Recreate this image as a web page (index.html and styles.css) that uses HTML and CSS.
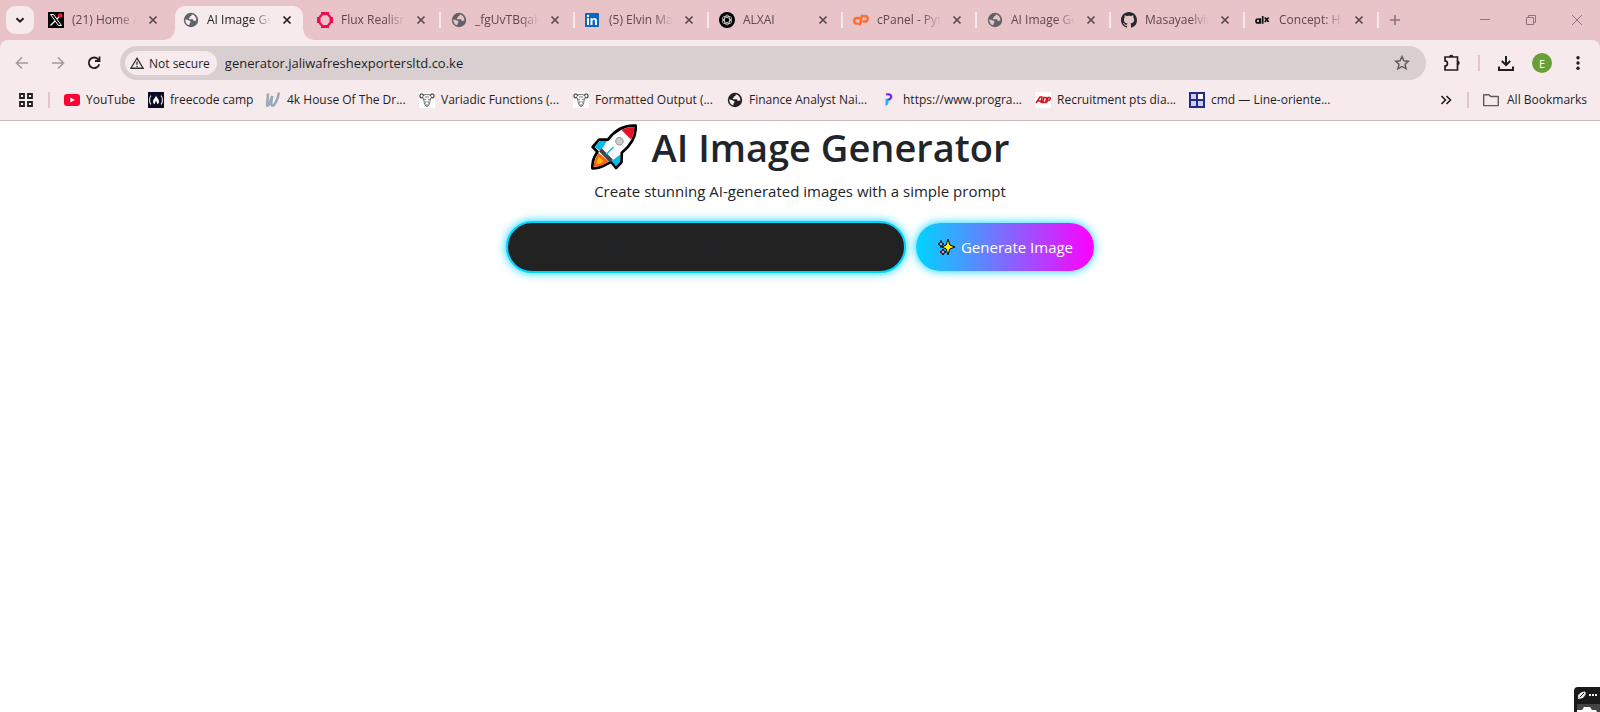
FILE: index.html
```
<!DOCTYPE html>
<html lang="en">
<head>
    <meta charset="UTF-8">
    <meta name="viewport" content="width=device-width, initial-scale=1.0">
    <title>AI Image Generator</title>
    <link rel="stylesheet" href="styles.css">
</head>
<body>
    <!-- shared icons -->
    <svg class="icon-defs" aria-hidden="true">
        <symbol id="close" viewBox="0 0 16 16"><path d="M4.500 4.500l7 7M11.500 4.500l-7 7" fill="none" stroke="currentColor" stroke-width="1.700"/></symbol>
        <symbol id="globe" viewBox="0 0 16 16">
            <circle cx="8" cy="8" r="7.200" fill="currentColor"/>
            <path d="M8.700 2.300c.3 1-.2 1.700-1.200 1.900-.8.200-.9.800-.8 1.500-.9.400-1.200 1-.6 1.600h3c.9 0 1.300.6 1.300 1.400 1.100 0 1.900.2 2.900-.1A5.700 5.700 0 0 0 8.700 2.300zM2.400 7.200c1.600.5 3.300.9 4.600 1.700.8.500.7 1.400 0 1.900-.5.400-.3 1.500-.8 2.500A5.600 5.600 0 0 1 2.400 7.200z" fill="var(--land)"/>
        </symbol>
        <symbol id="gnu" viewBox="0 0 16 16">
            <path d="M0 0h16v16H0z" fill="#fff"/>
            <path d="M5 4C3 .500.500 2 1 4.500 1.500 6.500 4 6 4 4.500M11 4c2-3.500 4.500-2 4 .5-.5 2-3 1.500-3 0" fill="none" stroke="#444" stroke-width="1.200"/>
            <path d="M4 3.500c2-1.500 6-1.500 8 0M4 6l1 3 .5 3L8 15l2.500-3 .5-3 1-3M4.500 7l2.500.8M11.500 7L9 7.800M7 9l-.5 2.500M9 9l.5 2.500M6.500 13h3M6 5h4" fill="none" stroke="#555" stroke-width=".8"/>
        </symbol>
    </svg>

    <header class="browser">
        <div class="tab-strip">
            <button class="tab-search" aria-label="Search tabs">
                <svg viewBox="0 0 16 16" width="16" height="16"><path d="M4.500 6.200L8 9.700l3.500-3.500" fill="none" stroke="#1f1f1f" stroke-width="2"/></svg>
            </button>
            <div class="tabs">
                <div class="tab before-active">
                    <svg class="favicon" viewBox="0 0 16 16"><path d="M0 0h16v16H0z" fill="#000"/><path d="M2.500 2.500h3l8 11h-3z" fill="none" stroke="#fff"/><path d="M13 2.500L9 7M7 9l-4.500 4.500" stroke="#fff" stroke-width="1.300"/><circle cx="12.200" cy="3.500" r="2.300" fill="#f91828"/></svg>
                    <span class="tab-title">(21) Home / X</span>
                    <button class="tab-close" aria-label="Close tab"><svg><use href="#close"/></svg></button>
                </div>
                <div class="tab active">
                    <svg class="favicon globe"><use href="#globe"/></svg>
                    <span class="tab-title">AI Image Generator</span>
                    <button class="tab-close" aria-label="Close tab"><svg><use href="#close"/></svg></button>
                </div>
                <div class="tab">
                    <svg class="favicon" viewBox="0 0 16 16"><path d="M4 0h8v2l2 2v1h2v6h-2v1l-2 2v2H4v-2l-2-2v-1H0V5h2V4l2-2zM6 3L3.500 6v4L6 13h4l2.500-3V6L10 3z" fill="#f50a50" fill-rule="evenodd"/></svg>
                    <span class="tab-title">Flux Realism Lora</span>
                    <button class="tab-close" aria-label="Close tab"><svg><use href="#close"/></svg></button>
                </div>
                <div class="tab">
                    <svg class="favicon globe"><use href="#globe"/></svg>
                    <span class="tab-title">_fgUvTBqaHxk</span>
                    <button class="tab-close" aria-label="Close tab"><svg><use href="#close"/></svg></button>
                </div>
                <div class="tab">
                    <svg class="favicon" viewBox="0 0 16 16"><rect y="1" width="14" height="14" rx="1" fill="#0a66c2"/><path d="M2 6.200h2V13H2zM5.500 6.200h2v1C8.700 5.400 12 5.700 12 8.700V13h-2V9.300c0-2-2.500-1.900-2.500 0V13h-2z" fill="#fff"/><circle cx="3" cy="4" r="1.200" fill="#fff"/></svg>
                    <span class="tab-title">(5) Elvin Masaya</span>
                    <button class="tab-close" aria-label="Close tab"><svg><use href="#close"/></svg></button>
                </div>
                <div class="tab">
                    <svg class="favicon" viewBox="0 0 16 16"><circle cx="8" cy="8" r="8" fill="#000"/><g fill="none" stroke="#ddd" stroke-width=".8"><ellipse cx="8" cy="8" rx="2.600" ry="5"/><ellipse cx="8" cy="8" rx="2.600" ry="5" transform="rotate(60 8 8)"/><ellipse cx="8" cy="8" rx="2.600" ry="5" transform="rotate(120 8 8)"/></g></svg>
                    <span class="tab-title">ALXAI</span>
                    <button class="tab-close" aria-label="Close tab"><svg><use href="#close"/></svg></button>
                </div>
                <div class="tab">
                    <svg class="favicon" viewBox="0 0 16 16"><path d="M7.500 6H4a2.800 2.800 0 0 0 0 5.700h1.500M6.500 13.500L9 4h3a2.700 2.700 0 0 1 0 5.500H9.500" fill="none" stroke="#ff6c2c" stroke-width="2.300"/></svg>
                    <span class="tab-title">cPanel - Python</span>
                    <button class="tab-close" aria-label="Close tab"><svg><use href="#close"/></svg></button>
                </div>
                <div class="tab">
                    <svg class="favicon globe"><use href="#globe"/></svg>
                    <span class="tab-title">AI Image Generator</span>
                    <button class="tab-close" aria-label="Close tab"><svg><use href="#close"/></svg></button>
                </div>
                <div class="tab">
                    <svg class="favicon" viewBox="0 0 16 16"><path fill="#24292f" d="M8 0C3.580 0 0 3.580 0 8c0 3.540 2.290 6.530 5.470 7.590.4.070.55-.17.55-.38 0-.19-.01-.82-.01-1.490-2.010.37-2.530-.49-2.690-.94-.09-.23-.48-.94-.82-1.130-.28-.15-.68-.52-.01-.53.63-.01 1.080.58 1.230.82.72 1.210 1.870.87 2.330.66.07-.52.28-.87.51-1.070-1.780-.2-3.640-.89-3.640-3.950 0-.87.31-1.590.82-2.150-.08-.2-.36-1.020.08-2.120 0 0 .67-.21 2.200.82.64-.18 1.320-.27 2-.27s1.360.09 2 .27c1.530-1.040 2.200-.82 2.200-.82.44 1.100.16 1.920.08 2.120.51.56.82 1.270.82 2.150 0 3.070-1.870 3.750-3.650 3.950.29.25.54.73.54 1.480 0 1.070-.01 1.930-.01 2.200 0 .21.15.46.55.38A8.010 8.010 0 0 0 16 8c0-4.420-3.580-8-8-8z"/></svg>
                    <span class="tab-title">Masayaelvin</span>
                    <button class="tab-close" aria-label="Close tab"><svg><use href="#close"/></svg></button>
                </div>
                <div class="tab">
                    <svg class="favicon" viewBox="0 0 16 16"><g fill="none" stroke="#111" stroke-width="1.700"><circle cx="3" cy="9" r="2"/><path d="M5.300 6.200v5.600M7.700 4v7.800M9.700 5.500l4 4.500M13.700 5.500l-4 4.500"/></g></svg>
                    <span class="tab-title">Concept: Hypertext</span>
                    <button class="tab-close" aria-label="Close tab"><svg><use href="#close"/></svg></button>
                </div>
            </div>
            <button class="new-tab" aria-label="New tab">
                <svg viewBox="0 0 16 16" width="16" height="16"><path d="M8 3v10M3 8h10" stroke="#8c7679" stroke-width="1.600"/></svg>
            </button>
            <div class="window-controls">
                <button aria-label="Minimize"><svg viewBox="0 0 10 10"><path d="M0 4.500h10" stroke="#8c7679" fill="none"/></svg></button>
                <button aria-label="Restore"><svg viewBox="0 0 10 10"><path d="M.5 2.500h7v7h-7zM2.500 2.500v-2h7v7h-2" stroke="#8c7679" fill="none"/></svg></button>
                <button aria-label="Close"><svg viewBox="0 0 10 10"><path d="M0 0l10 10M10 0L0 10" stroke="#8c7679" fill="none"/></svg></button>
            </div>
        </div>

        <div class="chrome-panel">
            <div class="toolbar">
                <button class="tool-button" aria-label="Back"><svg viewBox="0 0 16 16"><path d="M14 8H3M8 2.500L2.500 8 8 13.500" fill="none" stroke="#a39a9c" stroke-width="1.600"/></svg></button>
                <button class="tool-button" aria-label="Forward"><svg viewBox="0 0 16 16"><path d="M2 8h11M8 2.500L13.500 8 8 13.500" fill="none" stroke="#a39a9c" stroke-width="1.600"/></svg></button>
                <button class="tool-button" aria-label="Reload"><svg viewBox="0 0 16 16"><path d="M13.200 9.200a5.300 5.300 0 1 1-1.200-5l1.500 1.600M13.500 1.500v4.500H9" fill="none" stroke="#1f1f1f" stroke-width="1.800"/></svg></button>
                <div class="address-bar">
                    <button class="site-chip">
                        <svg viewBox="0 0 16 14" width="14" height="14"><path d="M8 1.500L15 13H1z" fill="none" stroke="#333" stroke-width="1.500"/><path d="M8 5.500v3.500M8 10v1.500" stroke="#333" stroke-width="1.500"/></svg>
                        Not secure
                    </button>
                    <input class="url" type="text" aria-label="Address" value="generator.jaliwafreshexportersltd.co.ke">
                    <button class="star" aria-label="Bookmark this tab"><svg viewBox="0 0 16 16"><path d="M8 1.500l1.900 4.300 4.600.4-3.500 3.100 1.100 4.600L8 11.500l-4.100 2.400L5 9.300 1.500 6.200l4.600-.4z" fill="none" stroke="#5a5557" stroke-width="1.400"/></svg></button>
                </div>
                <div class="toolbar-actions">
                    <button class="tool-button" aria-label="Extensions"><svg viewBox="0 0 18 18"><path d="M2 3h12.500v13H2v-4c3.200-.2 3.200-5 0-5.200z" stroke="#1f1f1f" stroke-width="1.700" fill="none"/><path d="M6 3a2.200 2.200 0 0 1 4.400 0zM14.500 6.800a2.200 2.200 0 0 1 0 4.400z" fill="#1f1f1f"/></svg></button>
                    <span class="divider"></span>
                    <button class="tool-button" aria-label="Downloads"><svg viewBox="0 0 18 18"><path d="M9 2v8.500M4.800 7L9 11l4.200-4M2 12.500V16h14v-3.500" fill="none" stroke="#1f1f1f" stroke-width="2"/></svg></button>
                    <button class="avatar" aria-label="Profile">E</button>
                    <button class="tool-button menu" aria-label="Menu"><svg viewBox="0 0 16 16"><g fill="#1f1f1f"><circle cx="8" cy="2.800" r="1.700"/><circle cx="8" cy="8" r="1.700"/><circle cx="8" cy="13.200" r="1.700"/></g></svg></button>
                </div>
            </div>

            <nav class="bookmarks">
                <button class="apps" aria-label="Apps"><svg viewBox="0 0 14 14" width="14" height="14"><path d="M1 1h4v4H1zM9 1h4v4H9zM1 9h4v4H1zM9 9h4v4H9z" fill="none" stroke="#1f1f1f" stroke-width="1.800"/></svg></button>
                <span class="divider"></span>
                <div class="bookmark-list">
                    <a class="short" href="#"><svg viewBox="0 0 16 16"><rect y="2" width="16" height="12" rx="3" fill="#ff0033"/><path d="M6.300 5.400v5.200l4.500-2.600z" fill="#fff"/></svg><span>YouTube</span></a>
                    <a class="medium" href="#"><svg viewBox="0 0 16 16"><path d="M0 0h16v16H0z" fill="#0a0a23"/><path d="M3 3.500c-2 2.500-2 6.500 0 9M13 3.500c2 2.500 2 6.500 0 9" fill="none" stroke="#ddd" stroke-width="1.200"/><path d="M8 3.500c.5 2 3 3.500 3 6 0 1.500-.7 2.200-1.500 2.700L8 8.500l-1.500 3.700C5.500 11.500 5 10.700 5 9.500c0-2.500 2.500-3.500 3-6z" fill="#fff"/></svg><span>freecode camp</span></a>
                    <a href="#"><svg viewBox="0 0 16 16"><path d="M2.500 1.500c1.500 2-1 8-.3 12 1 1 3-3 5-9.500-1 5-1.500 9.500.2 9.700 2 0 5.500-6 6.500-13.200" fill="none" stroke="#9aaaba" stroke-width="2.600"/></svg><span>4k House Of The Dr...</span></a>
                    <a href="#"><svg><use href="#gnu"/></svg><span>Variadic Functions (...</span></a>
                    <a href="#"><svg><use href="#gnu"/></svg><span>Formatted Output (...</span></a>
                    <a href="#"><svg class="globe dark"><use href="#globe"/></svg><span>Finance Analyst Nai...</span></a>
                    <a href="#"><svg viewBox="0 0 16 16"><path d="M5 2.500c6-1.500 7.500 4.500 1 5.500" fill="none" stroke="#7a1df0" stroke-width="2.200"/><path d="M4.500 6.500L8 8l-1 4.500L4.500 14z" fill="#1ab4ff"/></svg><span>https://www.progra...</span></a>
                    <a href="#"><svg viewBox="0 0 16 16"><path d="M0 0h16v16H0z" fill="#fff"/><path d="M1 11l4-6h2l-1 6M3 9h4M7.500 10.500L9 5.500h1.500c2 0 1 5-1.500 5zM11.500 11L13 5.500h1.500c1.500 0 1 3-1.500 3" fill="none" stroke="#d0121b" stroke-width="1.500"/></svg><span>Recruitment pts dia...</span></a>
                    <a href="#"><svg viewBox="0 0 16 16"><path d="M0 0h16v16H0z" fill="#242a88"/><path d="M2 2h5v5H2zM2 9h5v5H2zM9 9h5v5H9z" fill="#cdd0ea"/><path d="M9 2h5v5H9z" fill="#fff"/></svg><span>cmd — Line-oriente...</span></a>
                </div>
                <button class="more" aria-label="More bookmarks"><svg viewBox="0 0 12 12" width="12" height="12"><path d="M1.500 2l4 4-4 4M6.500 2l4 4-4 4" fill="none" stroke="#1f1f1f" stroke-width="1.600"/></svg></button>
                <span class="divider"></span>
                <a class="all-bookmarks" href="#"><svg viewBox="0 0 16 16"><path d="M.7 2.700h5.200l1.800 1.800h7.600v9.100H.7z" fill="none" stroke="#5f5a5c" stroke-width="1.400" stroke-linejoin="round"/></svg><span>All Bookmarks</span></a>
            </nav>
        </div>
    </header>

    <main class="generator">
        <h1>
            <svg class="rocket" viewBox="0 0 136 134" aria-hidden="true">
                <path d="M132 4C100 2 72 16 50 45L24 45 5 67l14 14-8 14C5 106 4 120 4 130c12 0 26-3 40-11l16-8 14 18 16-17 1-28C121 60 134 34 132 4z" fill="#fff" stroke="#000" stroke-width="8" stroke-linejoin="round"/>
                <path d="M128 8c-14 0-27 3-38 9 9 9 19 19 28 28 8-13 11-24 10-37z" fill="#e81224"/>
                <path d="M47 49H26L11 66l14 11 10-8zM86 89v21l-12 13-14-14z" fill="#00bcf2"/>
                <path d="M24 80l31 32 10-7-34-35z" fill="#444"/>
                <path d="M22 84L12 105c-3 7-4 14-4 21 9 0 21-3 32-9l13-7z" fill="#f7630c"/>
                <path d="M24 96l13 13-12 8-9 1 1-9z" fill="#ffb900"/>
                <path d="M44 89l23-22" stroke="#00bcf2" stroke-width="4"/>
                <circle cx="84" cy="50" r="11" fill="#ccc" stroke="#999" stroke-width="3"/>
            </svg>
            AI Image Generator
        </h1>
        <p>Create stunning AI-generated images with a simple prompt</p>
        <form class="prompt-form" onsubmit="return false">
            <input type="text" class="prompt-input" maxlength="50" aria-label="Prompt" placeholder="Enter your prompt (max 50 chars)">
            <button type="submit" class="generate-button">
                <svg viewBox="0 0 18 18" width="18" height="18" aria-hidden="true">
                    <path d="M4 2.500l1 2.500 2 1-2 1-1 2.500L3 7 1 6l2-1z" fill="#5fd0f5" stroke="#000"/>
                    <path d="M6 11l1 2 2 1-2 1-1 2-1-2-2-1 2-1z" fill="#f58ab0" stroke="#000"/>
                    <path d="M11 1l1.800 6L18 9l-5.200 2L11 17l-1.800-6L5 9l4.200-2z" fill="#fff100" stroke="#000"/>
                </svg>
                Generate Image
            </button>
        </form>
    </main>

    <aside class="capture-widget" aria-label="Capture tool">
        <svg viewBox="0 0 26 25" width="26" height="25">
            <path d="M5 11c-2-3 2-6 6-6 1 3-2 7-6 6zM4 12l6-6" fill="#eee" stroke="#eee"/>
            <path d="M6 10l4-4" stroke="#222"/>
            <path d="M15 7h2v2h-2zM18 7h2v2h-2zM21 7h2v2h-2z" fill="#eee"/>
            <path d="M3 17h23v8H3z" fill="#444"/>
            <path d="M3 25v-2h5l2-3h6l2 3h4l1 2z" fill="#fff"/>
        </svg>
    </aside>
</body>
</html>
```
FILE: styles.css
```
* {
    box-sizing: border-box;
}
body {
    --strip: #e8c3c8;
    --panel: #f7eaec;
    margin: 0;
    min-height: 100vh;
    background-color: #fff;
    color: #212529;
    font-family: "Open Sans", "Noto Sans", sans-serif;
    font-size: 15px;
    line-height: 24px;
}
button {
    display: flex;
    align-items: center;
    justify-content: center;
    padding: 0;
    border: none;
    background: none;
    font-family: inherit;
    color: inherit;
    flex-shrink: 0;
}
svg {
    display: block;
    flex-shrink: 0;
}
.icon-defs {
    display: none;
}
.browser {
    background-color: var(--strip);
    color: #1f1f1f;
    font-size: 12px;
    line-height: 16px;
}

/* tabs */
.tab-strip {
    display: flex;
    height: 40px;
    padding-left: 6px;
}
.tab-search {
    width: 28px;
    height: 28px;
    margin-top: 6px;
    border-radius: 9px;
    background-color: var(--panel);
}
.tabs {
    display: flex;
    margin-left: 5px;
}
.tab {
    position: relative;
    display: flex;
    align-items: center;
    width: 134px;
    padding: 0 11px;
    color: #5b494d;
}
.tab::after {
    content: "";
    width: 2px;
    height: 16px;
    position: absolute;
    right: -1px;
    background-color: var(--panel);
}
.tab.before-active {
    width: 133px;
    padding-left: 9px;
}
.tab.before-active::after {
    display: none;
}
.favicon {
    width: 16px;
    height: 16px;
}
.globe {
    --land: var(--strip);
    color: #5f6368;
}
.tab-title {
    flex: 1;
    min-width: 0;
    margin-left: 8px;
    overflow: hidden;
    white-space: nowrap;
    -webkit-mask-image: linear-gradient(to right, #000 70%, transparent);
    mask-image: linear-gradient(to right, #000 70%, transparent);
}
.tab-close {
    width: 16px;
    height: 16px;
    margin-left: 8px;
}
.tab-close svg {
    width: 16px;
    height: 16px;
}
.tab.active {
    width: 128px;
    margin: 6px 3px 0;
    padding: 0 8px 6px;
    border-radius: 10px 10px 0 0;
    background-color: var(--panel);
    color: #1f1f1f;
}
.active .globe {
    --land: var(--panel);
}
.tab.active::before,
.tab.active::after {
    content: "";
    position: absolute;
    bottom: 0;
    width: 10px;
    height: 10px;
}
.tab.active::before {
    left: -10px;
    background: radial-gradient(circle at 0 0, transparent 9px, var(--panel) 10px);
}
.tab.active::after {
    right: -10px;
    background: radial-gradient(circle at 100% 0, transparent 9px, var(--panel) 10px);
}
.new-tab {
    width: 28px;
    margin-left: 3px;
}
.window-controls {
    display: flex;
    margin-left: auto;
}
.window-controls button {
    width: 46px;
}
.window-controls svg {
    width: 10px;
    height: 10px;
}

/* toolbar */
.chrome-panel {
    background-color: var(--panel);
    border-radius: 8px 8px 0 0;
    border-bottom: 1px solid #c5b9bb;
}
.toolbar {
    display: flex;
    align-items: center;
    height: 46px;
    padding: 0 4px;
}
.tool-button {
    width: 36px;
    height: 34px;
}
.tool-button svg {
    width: 16px;
    height: 16px;
}
.toolbar-actions .tool-button svg {
    width: 18px;
    height: 18px;
}
.address-bar {
    display: flex;
    align-items: center;
    flex: 1;
    height: 34px;
    margin-left: 8px;
    padding: 0 16px 0 5px;
    border-radius: 17px;
    background-color: #d9cfd0;
}
.site-chip {
    gap: 5px;
    height: 24px;
    padding: 0 7px 0 5px;
    border-radius: 12px;
    background-color: var(--panel);
    font-size: 12px;
    font-weight: 500;
}
.url {
    flex: 1;
    min-width: 0;
    padding: 0 8px;
    border: none;
    outline: none;
    background: none;
    color: #1f1f1f;
    font-family: inherit;
    font-size: 13px;
}
.star svg {
    width: 16px;
    height: 16px;
}
.toolbar-actions {
    display: flex;
    align-items: center;
    margin-left: 8px;
}
.divider {
    width: 2px;
    height: 16px;
    background-color: var(--strip);
}
.toolbar-actions .divider {
    margin: 0 8px;
}
.avatar {
    width: 20px;
    height: 20px;
    margin: 0 8px;
    border-radius: 50%;
    background-color: #689f38;
    color: #fff;
    font-size: 11px;
}
.toolbar-actions .menu svg {
    width: 16px;
    height: 16px;
}

/* bookmarks bar */
.bookmarks {
    display: flex;
    align-items: center;
    height: 34px;
    padding: 0 13px 6px 19px;
}
.bookmarks a {
    display: flex;
    align-items: center;
    gap: 6px;
    color: inherit;
    text-decoration: none;
    white-space: nowrap;
}
.bookmarks a svg {
    width: 16px;
    height: 16px;
}
.apps {
    margin-right: 15px;
}
.bookmark-list {
    display: flex;
    flex: 1;
    margin-left: 14px;
}
.bookmark-list a {
    width: 154px;
}
.bookmark-list .short {
    width: 84px;
}
.bookmark-list .medium {
    width: 117px;
}
.globe.dark {
    --land: var(--panel);
    color: #1f1f1f;
}
.more {
    margin-right: 15px;
}
.bookmarks .all-bookmarks {
    gap: 8px;
    margin-left: 14px;
}

/* page */
.generator {
    padding-top: 2px;
    text-align: center;
}
.generator h1 {
    display: flex;
    align-items: center;
    justify-content: center;
    gap: 15px;
    margin: 0 0 8px;
    font-size: 38px;
    font-weight: 600;
    line-height: 48px;
}
.rocket {
    width: 46px;
    height: 46px;
}
.generator p {
    margin: 0 0 18px;
}
.prompt-form {
    display: flex;
    align-items: center;
    justify-content: center;
    gap: 10px;
}
.prompt-input {
    width: 400px;
    height: 52px;
    padding: 12px 20px;
    border: 2px solid #00d4ff;
    border-radius: 26px;
    outline: none;
    background-color: #222;
    box-shadow: 0 0 10px #00d4ff;
    color: #fff;
    font-family: inherit;
    font-size: 15px;
    text-align: center;
}
.prompt-input::placeholder {
    color: #212529;
}
.generate-button {
    gap: 6px;
    width: 178px;
    height: 48px;
    border-radius: 24px;
    background: linear-gradient(90deg, #00d4ff, #ff00ff);
    box-shadow: 0 0 10px #00d4ff;
    color: #fff;
    font-size: 15px;
    cursor: pointer;
}
.capture-widget {
    position: fixed;
    right: 0;
    bottom: 0;
    border-top-left-radius: 4px;
    background-color: #1a1a1a;
    overflow: hidden;
}
```
